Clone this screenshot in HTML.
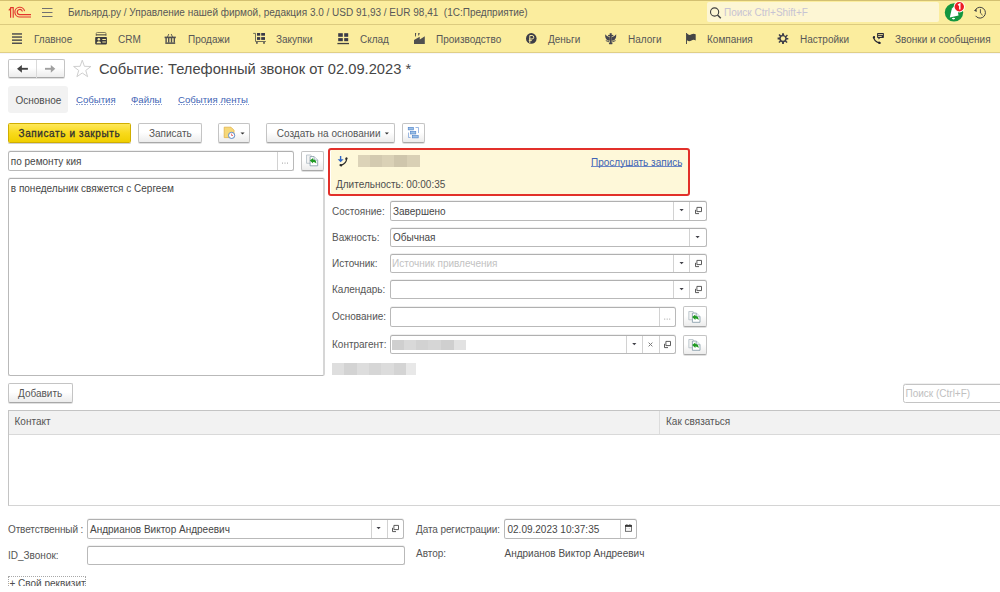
<!DOCTYPE html>
<html><head><meta charset="utf-8">
<style>
*{box-sizing:border-box}
html,body{margin:0;padding:0;width:1000px;height:592px;overflow:hidden;background:#fff;font-family:"Liberation Sans",sans-serif;color:#555}
.a{position:absolute}
.t{position:absolute;white-space:nowrap;font-size:10px;line-height:12px}
#hdr{left:0;top:0;width:1000px;height:53px;background:#fbed9e}
.hl{left:0;width:1000px;height:1px;background:#dccb7f}
.nav{color:#575757}
.inp{position:absolute;background:#fff;border:1px solid #b9b9b9;border-top-color:#b0b0b0;border-radius:2.5px;box-shadow:0 -1px 0 #f0f0f0}
.btn{position:absolute;border:1px solid #c4c4c4;border-bottom-color:#a8a8a8;border-radius:2px;background:linear-gradient(#fff 45%,#ececec);box-shadow:0 1px 0 rgba(0,0,0,.12)}
.dv{position:absolute;top:0;bottom:0;width:1px;background:#d2d2d2}
.lbl{color:#555}
.lk{font-size:9.6px;color:#4063b4;background:repeating-linear-gradient(90deg,#8fa3d4 0 1.5px,transparent 1.5px 2.7px) 0 10px/100% 1px no-repeat;height:12px}
.dd{position:absolute;width:0;height:0;border-left:2.5px solid transparent;border-right:2.5px solid transparent;border-top:3px solid #404040}
svg{position:absolute;overflow:visible}
.blur{position:absolute;display:flex}
.blur i{display:block;height:100%}
</style></head><body>
<div id="hdr" class="a"></div>
<div class="a hl" style="top:0;background:#d3c071"></div>
<div class="a hl" style="top:24px"></div>
<div class="a hl" style="top:52px;background:#e0cf86"></div>
<div class="a hl" style="top:53px;background:#f5f5fa"></div>

<!-- 1C logo -->
<svg style="left:0;top:0" width="40" height="24" viewBox="0 0 40 24">
 <g fill="none" stroke="#e2352d" stroke-width="1.15">
  <path d="M8.8,10.3 L10.6,8.3 M10.6,7.6 V17.8 M10.3,7.6 H13.2 V17.8"/>
  <path d="M24.6,11.2 A4.9,4.9 0 1 0 20.1,17.0 H31"/>
  <path d="M22.4,11.5 A2.6,2.6 0 1 0 20.1,14.6 H31"/>
 </g>
</svg>
<!-- header hamburger -->
<svg style="left:0;top:0" width="60" height="24" viewBox="0 0 60 24">
 <g stroke="#707070" stroke-width="1"><path d="M42,8.5H52.5M42,12.5H52.5M42,16.5H52.5"/></g>
</svg>

<!-- title -->
<div class="t" style="left:68px;top:7px;color:#585858">Бильярд.ру / Управление нашей фирмой, редакция 3.0 / USD 91,93 / EUR 98,41&nbsp; (1С:Предприятие)</div>

<!-- header search -->
<div class="a" style="left:707px;top:2px;width:232px;height:20px;background:#fdf6d4;border-radius:2px"></div>
<svg style="left:700px;top:0" width="30" height="24" viewBox="700 0 30 24">
 <circle cx="714.6" cy="12" r="4.1" fill="none" stroke="#404040" stroke-width="1.1"/>
 <path d="M717.5,15 L720.8,18.2" stroke="#404040" stroke-width="1.5"/>
</svg>
<div class="t" style="left:724px;top:7px;color:#c7c3d3">Поиск Ctrl+Shift+F</div>
<!-- notifications -->
<svg style="left:940px;top:0" width="60" height="24" viewBox="940 0 60 24">
 <circle cx="954" cy="12.4" r="9.2" fill="#149640"/>
 <path d="M949.8,17.5 L951.5,10 Q953,5.5 957,6.5 L958.5,15.5 Z" fill="#fff"/>
 <ellipse cx="953.5" cy="18.6" rx="1.6" ry="0.8" fill="#fff"/>
 <circle cx="959.3" cy="6.8" r="5.6" fill="#fff"/>
 <circle cx="959.3" cy="6.8" r="4.7" fill="#ed1c24"/>
 <path d="M958,5.2 L959.8,4 V9.6" fill="none" stroke="#fff" stroke-width="1.4"/>
 <circle cx="980" cy="12.7" r="5.4" fill="none" stroke="#404040" stroke-width="0.9" stroke-dasharray="28 6" transform="rotate(200 980 12.7)"/>
 <path d="M974,10.5 L976.6,9.3 L976.6,12 Z" fill="#404040"/>
 <path d="M980.4,9.2 V13 L982.6,15.2" fill="none" stroke="#404040" stroke-width="0.9"/>
</svg>

<!-- nav icons -->
<svg style="left:0;top:24px" width="1000" height="28" viewBox="0 24 1000 28">
 <g fill="#505050">
  <!-- hamburger 4 lines -->
  <rect x="12" y="33.2" width="10" height="1.5"/><rect x="12" y="36.3" width="10" height="1.5"/><rect x="12" y="39.4" width="10" height="1.5"/><rect x="12" y="42.5" width="10" height="1.5"/>
  <!-- CRM -->
  <path d="M96.2,35.8 V33.6 Q96.2,32.5 97.3,32.5 H104.9 Q106,32.5 106,33.6 V35.8" fill="none" stroke="#7a7458" stroke-width="0.9"/>
  <rect x="96" y="34.3" width="10.2" height="1.1" fill="#4e4b42"/>
  <rect x="95.2" y="36.9" width="11.7" height="7.5" rx="0.8" fill="#3a3a3e"/>
  <circle cx="98.8" cy="39.3" r="1.25" fill="#fbed9e"/>
  <path d="M96.5,43.3 Q96.7,41.2 98.8,41.2 Q100.9,41.2 101.1,43.3 Z" fill="#fbed9e"/>
  <rect x="102.3" y="39" width="3.6" height="1" fill="#fbed9e"/><rect x="102.3" y="41.5" width="3.6" height="1" fill="#fbed9e"/>
  <!-- basket -->
  <path d="M167.5,37 L168.8,34 M172.5,37 L171.2,34" stroke="#505050" stroke-width="0.9" fill="none"/>
  <rect x="164.6" y="36.6" width="11.2" height="1.6"/>
  <rect x="165.3" y="42.4" width="9.9" height="1.5"/>
  <rect x="165.4" y="38" width="1.4" height="4.6"/><rect x="168" y="38" width="1.4" height="4.6"/><rect x="170.8" y="38" width="1.4" height="4.6"/><rect x="173.6" y="38" width="1.4" height="4.6"/>
  <!-- cart -->
  <path d="M253.2,33.4 H255.5 V41.5 H265.8" stroke="#606050" stroke-width="0.9" fill="none"/>
  <rect x="257" y="33" width="3.2" height="2.7" fill="#3a3a48"/><rect x="261.2" y="33" width="3.8" height="2.7" fill="#3a3a48"/>
  <rect x="257" y="37.1" width="3.2" height="2.8" fill="#3a3a48"/><rect x="261.2" y="37.1" width="3.8" height="2.8" fill="#3a3a48"/>
  <rect x="256.1" y="42" width="1.6" height="1.8"/><rect x="263.2" y="42" width="1.6" height="1.8"/>
  <!-- sklad -->
  <rect x="338.2" y="33.2" width="4.6" height="3.6" fill="#3a3a48"/><rect x="344.2" y="33.2" width="4" height="3.6" fill="#3a3a48"/>
  <rect x="338.2" y="38.1" width="4.6" height="3.1" fill="#3a3a48"/><rect x="344.2" y="38.1" width="4" height="3.1" fill="#3a3a48"/>
  <rect x="337.4" y="42.9" width="11.6" height="1.3" fill="#404040"/>
  <!-- factory -->
  <path d="M414,40 L419.7,36.7 L419.8,39.6 L424.8,36.2 V43.9 H414 Z"/>
  <path d="M415,33 H416.2 L415.8,36.6 H415 Z M418.2,33 H419.8 L419,35.5 H418.2Z"/>
  <!-- ruble coin -->
  <circle cx="531.3" cy="38.4" r="5.3" fill="#3d3d48"/>
  <path d="M529.8,43 V35.5 H532 Q533.8,35.5 533.8,37.2 Q533.8,39 532,39 H529 M528.8,40.6 H531.8" stroke="#f4e6a0" stroke-width="1" fill="none"/>
  <!-- eagle -->
  <g fill="#454550">
   <path d="M605.2,34.2 Q604.8,39.6 608.6,40.8 L609.9,40.2 L609.7,37.3 Q607,36.8 605.2,34.2 Z"/>
   <path d="M616.2,34.2 Q616.6,39.6 612.8,40.8 L611.5,40.2 L611.7,37.3 Q614.4,36.8 616.2,34.2 Z"/>
   <rect x="609.7" y="33.2" width="2" height="10.2"/>
   <rect x="608.1" y="34.9" width="5.2" height="1.3"/>
   <ellipse cx="610.7" cy="43.4" rx="1.9" ry="0.9"/>
  </g>
  <path d="M605.8,40.6 L609.2,41.9 M615.6,40.6 L612.2,41.9" stroke="#454550" stroke-width="0.9" fill="none"/>
  <!-- flag -->
  <rect x="686" y="33" width="1" height="11" fill="#505050"/>
  <path d="M687,33.5 Q689,35.8 691.5,34.3 Q693.5,33 695.7,34.3 V40.5 Q693.5,39.2 691.5,40.5 Q689,42 687,40.3 Z" fill="#454545"/>
  <!-- gear -->
  <g transform="translate(783 38.5)">
   <path d="M-0.9,-5.3 H0.9 L1.2,-3.3 L2.6,-2.6 L3.9,-3.9 L4.9,-3 L3.5,-1.6 L3.6,-0.6 L5.3,-0.5 V1 L3.6,1 L3.2,2.2 L4.6,3.6 L3.6,4.6 L2.2,3.2 L1,3.7 L0.9,5.4 H-0.9 L-1,3.7 L-2.2,3.2 L-3.6,4.6 L-4.6,3.6 L-3.2,2.2 L-3.7,1 L-5.4,1 V-0.9 L-3.6,-0.9 L-3.2,-2.1 L-4.5,-3.5 L-3.5,-4.5 L-2.1,-3.2 L-1,-3.5 Z" fill="#3d3d48"/>
   <circle r="2.2" fill="#fbed9e"/>
  </g>
  <!-- phone msg -->
  <path d="M873.8,37 Q873.6,41.2 879.6,43.2" stroke="#202030" stroke-width="1.1" fill="none"/>
  <ellipse cx="873.9" cy="37.3" rx="1.1" ry="1.4" fill="#202030" transform="rotate(20 873.9 37.3)"/>
  <ellipse cx="879.4" cy="42.8" rx="1.5" ry="1.1" fill="#202030" transform="rotate(20 879.4 42.8)"/>
  <rect x="877.1" y="33" width="6.8" height="5" rx="0.7" fill="#2a2a38"/>
  <rect x="878.1" y="34.2" width="4.8" height="0.9" fill="#fbed9e"/><rect x="878.1" y="36" width="3.6" height="0.9" fill="#fbed9e"/>
  <path d="M878.2,37.8 L878.6,39.6 L880.4,37.8Z" fill="#2a2a38"/>
 </g>
</svg>

<!-- nav texts -->
<div class="t nav" style="top:34px;left:34px;">Главное</div>
<div class="t nav" style="top:34px;left:118px;">CRM</div>
<div class="t nav" style="top:34px;left:188px;">Продажи</div>
<div class="t nav" style="top:34px;left:276px;">Закупки</div>
<div class="t nav" style="top:34px;left:360px;">Склад</div>
<div class="t nav" style="top:34px;left:436px;">Производство</div>
<div class="t nav" style="top:34px;left:548px;">Деньги</div>
<div class="t nav" style="top:34px;left:628px;">Налоги</div>
<div class="t nav" style="top:34px;left:707px;">Компания</div>
<div class="t nav" style="top:34px;left:800px;">Настройки</div>
<div class="t nav" style="top:34px;left:895px;">Звонки и сообщения</div>

<!-- back / forward -->
<div class="btn" style="left:8px;top:59px;width:57px;height:19px"></div>
<div class="a" style="left:36px;top:60px;width:1px;height:17.5px;background:#dadada"></div>
<svg style="left:0;top:50px" width="100" height="40" viewBox="0 50 100 40">
 <path d="M19.5,68.8 H27.9" stroke="#424242" stroke-width="1.9"/><path d="M17,68.8 L21.9,64.9 V72.7 Z" fill="#424242"/>
 <path d="M45,68.8 H52" stroke="#a0a0a0" stroke-width="1.9"/><path d="M55.3,68.8 L50.8,64.9 V72.7 Z" fill="#a0a0a0"/>
 <path d="M82.25,60.20 L84.42,66.31 L90.90,66.49 L85.77,70.44 L87.60,76.66 L82.25,73.00 L76.90,76.66 L78.73,70.44 L73.60,66.49 L80.08,66.31 Z" fill="none" stroke="#c8c8c8" stroke-width="0.9"/>
</svg>

<!-- form title -->
<div class="t" style="left:99px;top:61px;font-size:14.7px;line-height:17px;color:#464646">Событие: Телефонный звонок от 02.09.2023 *</div>

<!-- tabs -->
<div class="a" style="left:8px;top:86px;width:60px;height:27px;background:#f2f2f2;border-radius:3px"></div>
<div class="t" style="left:15.5px;top:95px;color:#4d4d4d">Основное</div>
<div class="t lk" style="left:76px;top:94px;width:40px">События</div>
<div class="t lk" style="left:131px;top:94px;width:32px">Файлы</div>
<div class="t lk" style="left:178px;top:94px;width:71px">События ленты</div>

<!-- command bar -->
<div class="a" style="left:8px;top:123px;width:123px;height:19.5px;border:1px solid #d0ae00;border-radius:1.5px;background:linear-gradient(#fee75a,#f8da1c 50%,#f0cf00);box-shadow:0 1px 0 rgba(0,0,0,.18)"></div>
<div class="t" style="left:18.5px;top:128px;color:#303030;letter-spacing:0.6px;-webkit-text-stroke:0.3px #303030">Записать и закрыть</div>
<div class="btn" style="left:138px;top:123px;width:64px;height:20px"></div>
<div class="t" style="left:149px;top:128px">Записать</div>
<div class="btn" style="left:218px;top:123px;width:32px;height:20px"></div>
<svg style="left:210px;top:118px" width="50" height="30" viewBox="210 118 50 30">
 <path d="M224.2,127.2 H231 L234,130.2 V137.6 H224.2 Z" fill="#f6d879" stroke="#e2b24a" stroke-width="0.8"/>
 <circle cx="231.6" cy="135.4" r="3.1" fill="#fff" stroke="#4a7fc8" stroke-width="0.9"/>
 <path d="M231.6,133.6 V135.5 H233" stroke="#e04040" stroke-width="0.7" fill="none"/>
 <path d="M240.5,132.6 H244.6 L242.55,134.6 Z" fill="#333"/>
</svg>
<div class="btn" style="left:265.5px;top:123px;width:129.5px;height:20px"></div>
<div class="t" style="left:276.8px;top:128px">Создать на основании</div>
<svg style="left:380px;top:118px" width="50" height="30" viewBox="380 118 50 30">
 <path d="M384.8,132.6 H388.9 L386.85,134.6 Z" fill="#333"/>
 <rect x="408.2" y="127.3" width="5.2" height="2.6" fill="#9cc0e6" stroke="#4a7fc8" stroke-width="0.6"/>
 <rect x="410.5" y="131.4" width="5.3" height="2.6" fill="#9cc0e6" stroke="#4a7fc8" stroke-width="0.6"/>
 <rect x="412.5" y="135.5" width="5.7" height="2.4" fill="#9cc0e6" stroke="#4a7fc8" stroke-width="0.6"/>
 <path d="M415.5,127.5 H418.5 V133 M408.5,132.5 V137.5 H410.5" stroke="#5a8ad0" stroke-width="0.6" fill="none"/>
</svg>
<div class="btn" style="left:401.5px;top:123px;width:23px;height:20px;background:linear-gradient(#fff 45%,#ececec)"></div>
<svg style="left:380px;top:118px" width="50" height="30" viewBox="380 118 50 30">
 <rect x="408.2" y="127.3" width="5.2" height="2.6" fill="#9cc0e6" stroke="#4a7fc8" stroke-width="0.6"/>
 <rect x="410.5" y="131.4" width="5.3" height="2.6" fill="#9cc0e6" stroke="#4a7fc8" stroke-width="0.6"/>
 <rect x="412.5" y="135.5" width="5.7" height="2.4" fill="#9cc0e6" stroke="#4a7fc8" stroke-width="0.6"/>
 <path d="M415.5,127.5 H418.5 V133 M408.5,132.5 V137.5 H410.5" stroke="#5a8ad0" stroke-width="0.6" fill="none"/>
</svg>

<!-- subject input -->
<div class="inp" style="left:8px;top:151px;width:285.5px;height:20px"><div class="dv" style="left:268px"></div></div>
<div class="t" style="left:10.8px;top:156px;color:#464646">по ремонту кия</div>
<svg style="left:270px;top:150px" width="30" height="22" viewBox="270 150 30 22"><g fill="#a0a0a0"><rect x="282" y="162.6" width="1" height="1"/><rect x="284.5" y="162.6" width="1" height="1"/><rect x="287" y="162.6" width="1" height="1"/></g></svg>
<div class="btn" style="left:301px;top:150.5px;width:23px;height:20px"></div>

<!-- textarea -->
<div class="inp" style="left:8px;top:178px;width:317px;height:198px;border-right:2px solid #d6d6d6"></div>
<div class="t" style="left:10.8px;top:183px;color:#464646">в понедельник свяжется с Сергеем</div>

<!-- call box -->
<div class="a" style="left:328px;top:148px;width:362px;height:48px;border:2px solid #e2302a;border-radius:3px;background:#fef8d9;box-shadow:inset 1px 0 0 #fff"></div>
<svg style="left:330px;top:150px" width="30" height="22" viewBox="330 150 30 22">
 <path d="M340.6,156 V160" stroke="#2f66c6" stroke-width="1.4"/><path d="M337.6,159.2 H343.6 L340.6,162.2 Z" fill="#2f66c6"/>
 <path d="M346.6,158.5 Q346.6,163.6 340.8,165.2" stroke="#2b2b2b" stroke-width="1.2" fill="none"/>
 <ellipse cx="346.4" cy="158.6" rx="1.1" ry="1.4" fill="#2b2b2b" transform="rotate(30 346.4 158.6)"/>
 <ellipse cx="340.9" cy="165.2" rx="1.5" ry="1.1" fill="#2b2b2b" transform="rotate(20 340.9 165.2)"/>
</svg>
<div class="blur" style="left:357.5px;top:155px;width:62px;height:12px">
 <i style="width:12px;background:#dcd3b8"></i><i style="width:12px;background:#d3cab0"></i><i style="width:12px;background:#dad1b6"></i><i style="width:13px;background:#cfc6ac"></i><i style="width:13px;background:#d9d0b5"></i>
</div>
<div class="t" style="left:591px;top:157px;color:#4063b4;background:linear-gradient(#6d87c4,#6d87c4) 0 9px/100% 1px no-repeat;height:12px">Прослушать запись</div>
<div class="t" style="left:336px;top:179px;color:#4d4d4d">Длительность: 00:00:35</div>

<!-- right fields -->
<div class="t lbl" style="left:332px;top:206px">Состояние:</div>
<div class="inp" style="left:390px;top:201px;width:317px;height:20px"><div class="dv" style="left:282px"></div><div class="dv" style="left:298px"></div></div>
<div class="t" style="left:393px;top:206px;color:#464646">Завершено</div>

<div class="t lbl" style="left:332px;top:232px">Важность:</div>
<div class="inp" style="left:390px;top:228px;width:317px;height:19px"><div class="dv" style="left:298px"></div></div>
<div class="t" style="left:393px;top:232px;color:#464646">Обычная</div>

<div class="t lbl" style="left:332px;top:258px">Источник:</div>
<div class="inp" style="left:390px;top:254px;width:317px;height:19px"><div class="dv" style="left:282px"></div><div class="dv" style="left:298px"></div></div>
<div class="t" style="left:392px;top:258px;color:#c2c2c2">Источник привлечения</div>

<div class="t lbl" style="left:332px;top:284px">Календарь:</div>
<div class="inp" style="left:390px;top:280px;width:317px;height:19px"><div class="dv" style="left:282px"></div><div class="dv" style="left:298px"></div></div>

<div class="t lbl" style="left:332px;top:311px">Основание:</div>
<div class="inp" style="left:390px;top:307px;width:285.5px;height:20px"><div class="dv" style="left:268px"></div></div>
<svg style="left:655px;top:305px" width="30" height="22" viewBox="655 305 30 22"><g fill="#a0a0a0"><rect x="664.2" y="318.6" width="1" height="1"/><rect x="666.7" y="318.6" width="1" height="1"/><rect x="669.2" y="318.6" width="1" height="1"/></g></svg>
<div class="btn" style="left:683px;top:306px;width:23.5px;height:21px"></div>

<div class="t lbl" style="left:332px;top:339px">Контрагент:</div>
<div class="inp" style="left:390px;top:335px;width:285.5px;height:19px"><div class="dv" style="left:235px"></div><div class="dv" style="left:251px"></div><div class="dv" style="left:268px"></div></div>
<div class="btn" style="left:683px;top:334.5px;width:23.5px;height:20.5px"></div>
<div class="blur" style="left:392px;top:340px;width:74px;height:10px">
 <i style="width:12px;background:#cfcfcf"></i><i style="width:12px;background:#d9d9d9"></i><i style="width:12px;background:#d2d2d2"></i><i style="width:13px;background:#d6d6d6"></i><i style="width:13px;background:#cfcfcf"></i><i style="width:12px;background:#e2e2e2"></i>
</div>
<div class="blur" style="left:332px;top:363px;width:84px;height:12px">
 <i style="width:12px;background:#dedede"></i><i style="width:13px;background:#d3d3d3"></i><i style="width:12px;background:#dddddd"></i><i style="width:12px;background:#d6d6d6"></i><i style="width:13px;background:#dcdcdc"></i><i style="width:12px;background:#d4d4d4"></i><i style="width:10px;background:#e8e8e8"></i>
</div>

<!-- Добавить, search -->
<div class="btn" style="left:8px;top:383px;width:64.5px;height:20px"></div>
<div class="t" style="left:18px;top:388px">Добавить</div>
<div class="inp" style="left:903px;top:383.5px;width:110px;height:19.5px;border-color:#c4c4c4"></div>
<div class="t" style="left:905.5px;top:388px;color:#c0c0c0">Поиск (Ctrl+F)</div>

<!-- table -->
<div class="a" style="left:8px;top:410px;width:1000px;height:96px;border:1px solid #c4c4c4;border-bottom-color:#d4d4d4;background:#fff"></div>
<div class="a" style="left:9px;top:411px;width:1000px;height:24px;background:#f2f2f2;border-bottom:1px solid #d9d9d9"></div>
<div class="a" style="left:659px;top:411px;width:1px;height:23px;background:#dcdcdc"></div>
<div class="t" style="left:14.5px;top:416px">Контакт</div>
<div class="t" style="left:666px;top:416px">Как связаться</div>

<!-- bottom -->
<div class="t lbl" style="left:8px;top:524px;letter-spacing:-0.12px">Ответственный :</div>
<div class="inp" style="left:87px;top:519px;width:316.5px;height:20px"><div class="dv" style="left:283px"></div><div class="dv" style="left:299px"></div></div>
<div class="t" style="left:90px;top:524px;color:#464646">Андрианов Виктор Андреевич</div>
<div class="t lbl" style="left:8px;top:550px">ID_Звонок:</div>
<div class="inp" style="left:87px;top:545.5px;width:317.5px;height:19px"></div>

<div class="t lbl" style="left:416px;top:524px;letter-spacing:-0.1px">Дата регистрации:</div>
<div class="inp" style="left:504px;top:519px;width:132.5px;height:20px"><div class="dv" style="left:115px"></div></div>
<div class="t" style="left:507.5px;top:524px;color:#464646">02.09.2023 10:37:35</div>
<svg style="left:620px;top:519px" width="17" height="20" viewBox="620 519 17 20">
 <rect x="625.4" y="525.3" width="6" height="6" fill="#fafafa" stroke="#505050" stroke-width="0.8"/>
 <rect x="625" y="525" width="6.8" height="1.9" fill="#3a3a3a"/>
 <path d="M626.9,524.2V525.6M629.9,524.2V525.6" stroke="#3a3a3a" stroke-width="0.9"/>
 <path d="M626.3,528.6H627.3M628.6,528.6H630" stroke="#b0b0b0" stroke-width="0.6"/>
</svg>
<div class="t lbl" style="left:416px;top:548px">Автор:</div>
<div class="t" style="left:504.5px;top:548px;color:#4d4d4d">Андрианов Виктор Андреевич</div>

<div class="a" style="left:8px;top:576px;width:78px;height:16px;border:1px dotted #a8a8a8;border-bottom:none"></div>
<div class="t" style="left:9.5px;top:578px;color:#4d4d4d">+ Свой реквизит</div>
<div class="a" style="left:0;top:586px;width:1000px;height:6px;background:#fff"></div>
<!-- dropdown arrows & open icons -->
<svg style="left:0;top:0" width="1000" height="592" viewBox="0 0 1000 592">
 <g fill="#404048">
  <path d="M679.5,209.0 H683.7 L681.6,211.2 Z"/>
  <path d="M695.5,236.0 H699.7 L697.6,238.2 Z"/>
  <path d="M679.5,262.0 H683.7 L681.6,264.2 Z"/>
  <path d="M679.5,288.0 H683.7 L681.6,290.2 Z"/>
  <path d="M632.2,343.0 H636.4 L634.3,345.2 Z"/>
  <path d="M376.5,527.0 H380.7 L378.6,529.2 Z"/>
 </g>
 <g fill="none" stroke="#4a4a4a" stroke-width="0.9">
  <path d="M695.5,209.8 V213.6 H699.0 M696.9,207.4 H701.5 V211.6 H696.9 Z"/>
  <path d="M695.5,262.8 V266.6 H699.0 M696.9,260.4 H701.5 V264.6 H696.9 Z"/>
  <path d="M695.5,288.8 V292.6 H699.0 M696.9,286.4 H701.5 V290.6 H696.9 Z"/>
  <path d="M664.5,343.8 V347.6 H668.0 M665.9,341.4 H670.5 V345.6 H665.9 Z"/>
  <path d="M392.5,527.8 V531.6 H396.0 M393.9,525.4 H398.5 V529.6 H393.9 Z"/>
  <path d="M648.6,342.6 L652.4,346.4 M652.4,342.6 L648.6,346.4" stroke="#7a7a7a" stroke-width="1"/>
 </g>
</svg>

<!-- green-arrow doc buttons -->
<svg style="left:0;top:0" width="1000" height="592" viewBox="0 0 1000 592">
 <defs>
  <g id="gd">
   <path d="M0,0 H4.2 L5,0.8 V8.3 H0 Z" fill="#f3f3f3" stroke="#a9b6be" stroke-width="0.7"/>
   <path d="M3.6,1.6 H7.6 L11.2,5.2 V10.8 H3.6 Z" fill="#fff" stroke="#7f96a4" stroke-width="0.8"/>
   <path d="M7.6,1.6 V5.2 H11.2" fill="#e8eef2" stroke="#7f96a4" stroke-width="0.6"/>
   <path d="M3.3,5.6 L6.6,2.9 V4.5 Q9.9,4.6 9.8,8.6 Q8.6,6.8 6.6,7 V8.4 Z" fill="#1f9a22"/>
  </g>
 </defs>
 <use href="#gd" x="306.5" y="155"/>
 <use href="#gd" x="688.8" y="311.5"/>
 <use href="#gd" x="688.8" y="339.5"/>
</svg>

</body></html>
